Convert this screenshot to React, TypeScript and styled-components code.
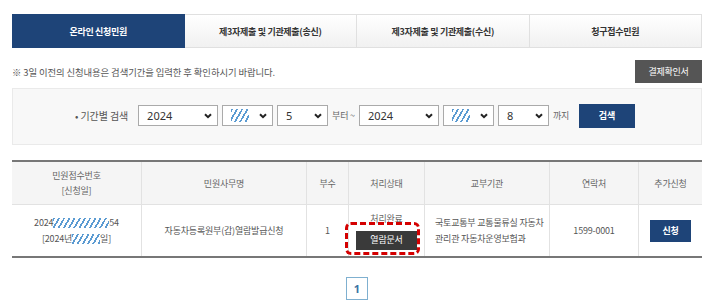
import React from "react";
import styled, { createGlobalStyle } from "styled-components";

const Global = createGlobalStyle`
  html, body { margin: 0; padding: 0; background: #fff; }
  body { font-family: "Noto Sans CJK KR", "Noto Sans", sans-serif; color: #555; }
  * { box-sizing: border-box; }
`;

const NAVY = "#1e4478";

const Page = styled.div`
  width: 720px;
  padding: 14px 18px 0 12px;
`;

const Tabs = styled.div`
  display: grid;
  grid-template-columns: repeat(4, 1fr);
  height: 34px;
`;

const Tab = styled.div<{ $active?: boolean }>`
  display: flex;
  align-items: center;
  justify-content: center;
  font-size: 9px;
  font-weight: 700;
  letter-spacing: -0.3px;
  color: ${(p) => (p.$active ? "#fff" : "#333")};
  background: ${(p) => (p.$active ? NAVY : "linear-gradient(#ffffff, #f1f1f1)")};
  border: 1px solid ${(p) => (p.$active ? NAVY : "#e0e0e0")};
  border-left-width: ${(p) => (p.$active ? "1px" : "0")};
`;

const NoticeRow = styled.div`
  display: flex;
  align-items: center;
  justify-content: space-between;
  margin-top: 12px;
  height: 23px;
`;

const Notice = styled.div`
  font-size: 9.4px;
  color: #555;
  letter-spacing: -0.1px;
`;

const DarkButton = styled.div`
  width: 67px;
  height: 23px;
  display: flex;
  align-items: center;
  justify-content: center;
  background: #555;
  color: #fff;
  font-size: 9px;
  letter-spacing: -0.3px;
`;

const SearchPanel = styled.div`
  margin-top: 5px;
  height: 57px;
  background: #f8f8f8;
  border: 1px solid #eaeaea;
  display: flex;
  align-items: center;
  padding-left: 62px;
  padding-bottom: 2px;
`;

const Label = styled.span`
  font-size: 10px;
  color: #555;
  margin-right: 10px;
  letter-spacing: -0.1px;
`;

const Select = styled.div<{ $w: number }>`
  width: ${(p) => p.$w}px;
  height: 21px;
  background: #fff;
  border: 1px solid #aaa;
  display: flex;
  align-items: center;
  justify-content: space-between;
  padding: 0 5px 0 8px;
  margin-right: 4px;
  font-family: "Noto Sans", sans-serif;
  font-size: 11px;
  color: #333;
`;

const Word = styled.span<{ $gap?: number }>`
  font-size: 9px;
  color: #666;
  margin-right: ${(p) => p.$gap ?? 4}px;
  letter-spacing: -0.2px;
`;

const NavyButton = styled.div<{ $w: number; $h: number }>`
  width: ${(p) => p.$w}px;
  height: ${(p) => p.$h}px;
  background: ${NAVY};
  color: #fff;
  display: flex;
  align-items: center;
  justify-content: center;
  font-size: 9px;
  font-weight: 700;
`;

const Hatch = styled.span<{ $w: number; $h: number }>`
  display: inline-block;
  width: ${(p) => p.$w}px;
  height: ${(p) => p.$h}px;
  vertical-align: middle;
  background: repeating-linear-gradient(
    120deg,
    #5b9bd2 0 1.7px,
    transparent 1.7px 4.5px
  );
`;

const Table = styled.div`
  margin-top: 15px;
  border-top: 2px solid #777;
  border-bottom: 2px solid #777;
  display: grid;
  grid-template-columns: 130px 165px 42px 76px 125px 89px 63px;
`;

const Head = styled.div<{ $last?: boolean }>`
  height: 43px;
  background: #f5f5f5;
  border-bottom: 1px solid #e2e2e2;
  border-right: ${(p) => (p.$last ? "0" : "1px solid #e2e2e2")};
  display: flex;
  align-items: center;
  justify-content: center;
  text-align: center;
  font-size: 9px;
  line-height: 15px;
  color: #666;
  letter-spacing: -0.2px;
`;

const Cell = styled.div<{ $last?: boolean; $left?: boolean }>`
  height: 51px;
  border-right: ${(p) => (p.$last ? "0" : "1px solid #e2e2e2")};
  display: flex;
  flex-direction: column;
  align-items: ${(p) => (p.$left ? "flex-start" : "center")};
  justify-content: center;
  padding-left: ${(p) => (p.$left ? "10px" : "0")};
  text-align: ${(p) => (p.$left ? "left" : "center")};
  font-size: 9px;
  line-height: 16px;
  color: #555;
  letter-spacing: -0.2px;
`;

const Status = styled.div`
  color: #666;
  line-height: 14px;
`;

const ViewButton = styled.div`
  position: relative;
  margin-top: 5px;
  width: 61px;
  height: 19px;
  background: #3a3a3a;
  color: #fff;
  display: flex;
  align-items: center;
  justify-content: center;
  font-size: 9px;
  &::after {
    content: "";
    position: absolute;
    left: -11px;
    right: -3px;
    top: -9px;
    bottom: -5px;
    border: 3px dashed #d40000;
    border-radius: 6px;
  }
`;

const Pager = styled.div`
  display: flex;
  justify-content: center;
  margin-top: 19px;
`;

const PageBox = styled.div`
  width: 22px;
  height: 23px;
  border: 1px solid #7fb0d0;
  display: flex;
  align-items: center;
  justify-content: center;
  font-size: 11px;
  font-weight: 700;
  color: #3d74a4;
  font-family: "Noto Sans", sans-serif;
`;

const Chevron = () => (
  <svg width="8" height="6" viewBox="0 0 8 6">
    <path d="M1 1.2 L4 4.2 L7 1.2" fill="none" stroke="#222" strokeWidth="2" />
  </svg>
);

export default function App() {
  return (
    <Page>
      <Global />
      <Tabs>
        <Tab $active>온라인 신청민원</Tab>
        <Tab>제3자제출 및 기관제출(송신)</Tab>
        <Tab>제3자제출 및 기관제출(수신)</Tab>
        <Tab>청구접수민원</Tab>
      </Tabs>
      <NoticeRow>
        <Notice>※ 3일 이전의 신청내용은 검색기간을 입력한 후 확인하시기 바랍니다.</Notice>
        <DarkButton>결제확인서</DarkButton>
      </NoticeRow>
      <SearchPanel>
        <Label>• 기간별 검색</Label>
        <Select $w={80}>
          2024
          <Chevron />
        </Select>
        <Select $w={51}>
          <Hatch $w={18} $h={13} />
          <Chevron />
        </Select>
        <Select $w={51}>
          5
          <Chevron />
        </Select>
        <Word>부터 ~</Word>
        <Select $w={80}>
          2024
          <Chevron />
        </Select>
        <Select $w={51}>
          <Hatch $w={18} $h={13} />
          <Chevron />
        </Select>
        <Select $w={51}>
          8
          <Chevron />
        </Select>
        <Word $gap={10}>까지</Word>
        <NavyButton $w={56} $h={24}>검색</NavyButton>
      </SearchPanel>
      <Table>
        <Head>
          민원접수번호
          <br />
          [신청일]
        </Head>
        <Head>민원사무명</Head>
        <Head>부수</Head>
        <Head>처리상태</Head>
        <Head>교부기관</Head>
        <Head>연락처</Head>
        <Head $last>추가신청</Head>
        <Cell>
          <div>
            2024<Hatch $w={56} $h={10} />54
          </div>
          <div>
            [2024년<Hatch $w={28} $h={10} />일]
          </div>
        </Cell>
        <Cell>자동차등록원부(갑)열람발급신청</Cell>
        <Cell>1</Cell>
        <Cell>
          <Status>처리완료</Status>
          <ViewButton>열람문서</ViewButton>
        </Cell>
        <Cell $left>
          <div>국토교통부 교통물류실 자동차</div>
          <div>관리관 자동차운영보험과</div>
        </Cell>
        <Cell>1599-0001</Cell>
        <Cell $last>
          <NavyButton $w={41} $h={22}>신청</NavyButton>
        </Cell>
      </Table>
      <Pager>
        <PageBox>1</PageBox>
      </Pager>
    </Page>
  );
}
